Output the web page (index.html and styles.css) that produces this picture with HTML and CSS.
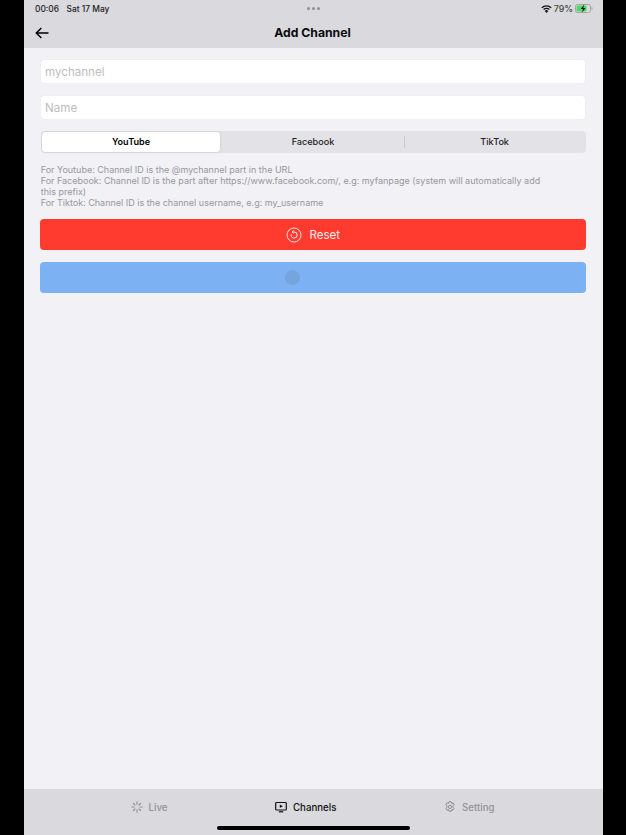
FILE: index.html
```html
<!DOCTYPE html>
<html lang="en">
<head>
<meta charset="utf-8">
<title>Add Channel</title>
<link rel="stylesheet" href="styles.css">
</head>
<body>
<div class="screen">
  <header class="top">
    <div class="status">
      <div class="status-left"><span>00:06</span><span>Sat 17 May</span></div>
      <div class="dots"><i></i><i></i><i></i></div>
      <div class="status-right">
        <svg class="wifi" width="11" height="8" viewBox="0 0 11 8"><path d="M5.500 8 3.700 5.900a2.700 2.700 0 0 1 3.600 0Z" fill="#111"/><path d="M2.600 4.600a4.400 4.400 0 0 1 5.800 0M.8 2.700a7 7 0 0 1 9.400 0" fill="none" stroke="#111" stroke-width="1.300"/></svg>
        <span>79%</span>
        <svg class="battery" width="18" height="9" viewBox="0 0 18 9"><rect x=".5" y=".5" width="15" height="8" rx="2" fill="none" stroke="#a5a5a9"/><rect x="1.500" y="1.500" width="10" height="6" rx="1" fill="#4cd964"/><path d="M16.500 3v3c.6 0 1-.6 1-1.500s-.4-1.500-1-1.500Z" fill="#a5a5a9"/><path d="M9.200 .6 5.800 5h2.200l-1 3.400L10.600 4H8.300Z" fill="#111"/></svg>
      </div>
    </div>
    <div class="nav">
      <svg class="back" width="14" height="12" viewBox="0 0 14 12"><path d="M13.500 6H1.500M6.300 1 1.300 6l5 5" fill="none" stroke="#000" stroke-width="1.500"/></svg>
      <h1>Add Channel</h1>
    </div>
  </header>

  <main class="content">
    <div class="field">mychannel</div>
    <div class="field">Name</div>
    <div class="segments">
      <div class="seg active">YouTube</div>
      <div class="seg">Facebook</div>
      <div class="seg divided">TikTok</div>
    </div>
    <p class="help">For Youtube: Channel ID is the @mychannel part in the URL<br>For Facebook: Channel ID is the part after https://www.facebook.com/, e.g: myfanpage (system will automatically add this prefix)<br>For Tiktok: Channel ID is the channel username, e.g: my_username</p>
    <button class="btn reset">
      <svg width="16" height="16" viewBox="0 0 16 16"><circle cx="8" cy="8" r="7" fill="none" stroke="#fff" stroke-opacity=".85" stroke-width="1"/><path d="M5.300 7.200a3 3 0 1 0 2.700-2.200H6.500M7.700 3.500 6.200 5l1.500 1.300" fill="none" stroke="#fff" stroke-opacity=".9" stroke-width="1"/></svg>
      <span>Reset</span>
    </button>
    <button class="btn save">
      <span class="spinner"></span>
      <span class="save-label">Save</span>
    </button>
  </main>

  <nav class="tabs">
    <div class="tab">
      <svg width="12" height="12" viewBox="0 0 12 12" stroke="#8e8e93" stroke-width="1.100" stroke-linecap="round"><path d="M6 .8v2.400M6 8.800v2.400M.8 6h2.400M8.800 6h2.400M2.300 2.300l1.700 1.700M8 8l1.700 1.700M2.300 9.700 4 8M8 4l1.700-1.700"/></svg>
      <span>Live</span>
    </div>
    <div class="tab current">
      <svg width="12" height="12" viewBox="0 0 12 12"><rect x=".7" y="1.500" width="10.600" height="7.500" rx=".8" fill="none" stroke="#111" stroke-width="1.200"/><path d="M4.800 3.400 7.800 5.200 4.800 7Z" fill="#111"/><path d="M3.800 10.800h4.400" stroke="#111" stroke-width="1.200"/></svg>
      <span>Channels</span>
    </div>
    <div class="tab">
      <svg width="12" height="12" viewBox="0 0 12 12"><path d="M4.900 .8h2.200l.4 1.500 1.500-.5 1.100 1.900-1.100 1.100v1.400l1.100 1.100-1.100 1.900-1.500-.5-.4 1.500H4.900l-.4-1.500-1.500.5-1.100-1.900 1.100-1.100V4.800L1.900 3.700 3 1.800l1.500.5Z" fill="none" stroke="#8e8e93" stroke-width="1" stroke-linejoin="round"/><circle cx="6" cy="5.900" r="1.600" fill="none" stroke="#8e8e93" stroke-width="1"/></svg>
      <span>Setting</span>
    </div>
    <div class="home"></div>
  </nav>
</div>
</body>
</html>
```

FILE: styles.css
```css
* { box-sizing: border-box; }
html, body { margin: 0; height: 100%; background: #000; }
body { font-family: Inter, "Liberation Sans", sans-serif; overflow: hidden; }

.screen {
  width: 579px;
  height: 835px;
  margin-left: 24px;
  background: #f1f1f6;
  display: flex;
  flex-direction: column;
}

.top { height: 48px; background: #d9d9de; padding: 0 11px; flex: none; }
.status {
  height: 17px;
  display: flex;
  align-items: center;
  justify-content: space-between;
  font-size: 8.400px;
  font-weight: 500;
  color: #222;
}
.status-left { display: flex; gap: 7.500px; width: 110px; }
.dots { display: flex; gap: 2px; margin-right: 2px; }
.dots i { width: 3px; height: 3px; border-radius: 50%; background: #8e8e93; }
.status-right { display: flex; align-items: center; justify-content: flex-end; gap: 2px; width: 110px; color: #444; font-size: 8.800px; margin-right: -1px; }

.nav { height: 31px; display: flex; align-items: center; position: relative; justify-content: center; }
.nav h1 { margin: 0 2px 0 0; font-size: 12.200px; font-weight: 700; color: #0a0a0a; }
.back { position: absolute; left: 0; top: 10px; }

.content { flex: 1; padding: 12px 18px 0 17px; display: flex; flex-direction: column; }
.field {
  height: 23px;
  margin-bottom: 13px;
  background: #fff;
  border-radius: 3px;
  padding: 0 4px;
  display: flex;
  align-items: center;
  color: #bdbdc2;
  font-size: 11.600px;
  box-shadow: 0 0 1px #dcdce0;
}
.field + .field { margin-bottom: 12px; }

.segments {
  height: 22px;
  margin: 0 -0.500px;
  display: grid;
  grid-template-columns: repeat(3, 1fr);
  background: #e2e2e7;
  border-radius: 4px;
  font-size: 9.100px;
  font-weight: 500;
  color: #222;
}
.seg { display: flex; align-items: center; justify-content: center; position: relative; padding-bottom: 1px; }
.seg.active { margin: 1px 2px 1px 1.500px; background: #fff; border-radius: 3.500px; color: #000; font-weight: 600; box-shadow: 0 0 2px #b9b9be; }
.seg.divided::before {
  content: "";
  position: absolute;
  left: 0;
  top: 5px;
  bottom: 5px;
  width: 1px;
  background: #c9c9ce;
}

.help {
  margin: 10.500px 0 0 -0.300px;
  padding-right: 32px;
  font-size: 9px;
  line-height: 11px;
  color: #98989d;
}

.btn {
  height: 31px;
  border: 0;
  border-radius: 4px;
  margin: 0 -1px;
  padding: 0;
  display: flex;
  align-items: center;
  justify-content: center;
  gap: 7.500px;
  font: inherit;
  font-size: 11.600px;
}
.reset { margin-top: 11.500px; background: #ff3b30; color: #fff; }
.reset span { color: #fff; opacity: .9; }
.save { margin-top: 12px; background: #7cb1f3; gap: 14px; }
.spinner { width: 15px; height: 15px; border-radius: 50%; background: #76a4dc; }
.save-label { color: #7cb1f3; }

.tabs {
  height: 46px;
  flex: none;
  background: #d9d9de;
  display: flex;
  justify-content: center;
  gap: 107.500px;
  position: relative;
  padding: 12px 2px 0 0;
  font-size: 9.700px;
}
.tab { height: 12px; display: flex; align-items: center; justify-content: center; gap: 6px; color: #949499; font-weight: 500; }
.tab.current { color: #111; }
.home {
  position: absolute;
  left: 193px;
  bottom: 5px;
  width: 192.500px;
  height: 4px;
  border-radius: 2px;
  background: #000;
}
```
